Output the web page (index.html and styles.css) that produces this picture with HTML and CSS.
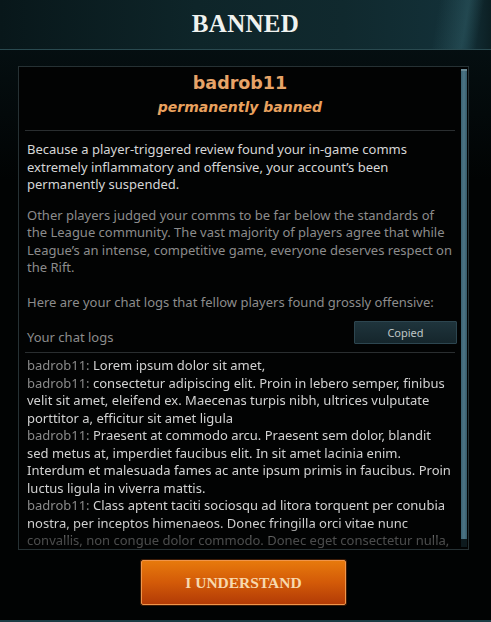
FILE: index.html
```html
<!DOCTYPE html>
<html>
<head>
<meta charset="utf-8">
<link rel="stylesheet" href="styles.css">
</head>
<body>
<div class="window">
  <header class="header"><h1 class="title">BANNED</h1></header>
  <main class="main">
    <section class="panel">
      <div class="content">
        <div class="who">
          <div class="name">badrob11</div>
          <div class="status">permanently banned</div>
        </div>
        <p class="p1">Because a player-triggered review found your in-game comms extremely inflammatory and offensive, your account’s been permanently suspended.</p>
        <p class="p2">Other players judged your comms to be far below the standards of the League community. The vast majority of players agree that while League’s an intense, competitive game, everyone deserves respect on the Rift.</p>
        <p class="p3">Here are your chat logs that fellow players found grossly offensive:</p>
        <div class="logs-head">
          <span class="logs-label">Your chat logs</span>
          <button class="copy">Copied</button>
        </div>
        <div class="logs">
          <div class="line"><span class="who-n">badrob11:</span> Lorem ipsum dolor sit amet,</div>
          <div class="line"><span class="who-n">badrob11:</span> consectetur adipiscing elit. Proin in lebero semper, finibus velit sit amet, eleifend ex. Maecenas turpis nibh, ultrices vulputate porttitor a, efficitur sit amet ligula</div>
          <div class="line"><span class="who-n">badrob11:</span> Praesent at commodo arcu. Praesent sem dolor, blandit sed metus at, imperdiet faucibus elit. In sit amet lacinia enim. Interdum et malesuada fames ac ante ipsum primis in faucibus. Proin luctus ligula in viverra mattis.</div>
          <div class="line"><span class="who-n">badrob11:</span> Class aptent taciti sociosqu ad litora torquent per conubia nostra, per inceptos himenaeos. Donec fringilla orci vitae nunc convallis, non congue dolor commodo. Donec eget consectetur nulla, sit amet tempus lorem.</div>
        </div>
      </div>
      <div class="scroll"><div class="thumb"></div></div>
    </section>
    <div class="actions"><button class="understand">I UNDERSTAND</button></div>
  </main>
</div>
</body>
</html>
```
FILE: styles.css
```css
* { box-sizing: border-box; }
html, body { margin: 0; padding: 0; }
body {
  width: 491px;
  height: 622px;
  overflow: hidden;
  background: #010202;
  font-family: "Noto Sans", "Open Sans", sans-serif;
}
.window {
  width: 491px;
  height: 622px;
  display: flex;
  flex-direction: column;
  background:
    linear-gradient(180deg, rgba(13,38,44,0.95) 0px, rgba(8,24,28,0.6) 40px, rgba(2,6,7,0) 180px),
    #010303;
  border-bottom: 2px solid #1d3d45;
}
.header {
  height: 50px;
  flex: none;
  border-bottom: 1px solid #2a4a50;
  background:
    linear-gradient(100deg, rgba(0,0,0,0) 88%, rgba(80,140,150,0.25) 94%, rgba(0,0,0,0) 97%),
    linear-gradient(90deg, #08171a 0%, #0e2529 40%, #10292e 70%, #133139 95%, #0c1f23 100%);
  display: flex;
  justify-content: center;
  align-items: center;
}
.title {
  margin: 0;
  margin-top: -2px;
  font-family: "Liberation Serif", "Times New Roman", serif;
  font-weight: bold;
  font-size: 25px;
  letter-spacing: 0.3px;
  color: #f0f2ef;
}
.main {
  flex: 1;
  display: flex;
  flex-direction: column;
  padding: 16px 22px 0 18px;
}
.panel {
  height: 484px;
  flex: none;
  display: flex;
  background: #020303;
  border: 1px solid #263134;
}
.content {
  flex: 1;
  min-width: 0;
  padding: 0 6px 0 6px;
  display: flex;
  flex-direction: column;
}
.who {
  text-align: center;
  padding-top: 5px;
  padding-bottom: 10px;
  border-bottom: 1px solid #2a2e30;
}
.name {
  font-family: "DejaVu Sans", sans-serif;
  font-weight: bold;
  font-size: 17.5px;
  line-height: 22px;
  color: #e7a468;
}
.status {
  font-family: "DejaVu Sans", sans-serif;
  font-weight: bold;
  font-style: italic;
  font-size: 14px;
  line-height: 26px;
  color: #e9a15e;
}
p {
  margin: 0;
  padding-left: 2px;
  font-size: 13px;
  line-height: 17.5px;
}
.p1 { margin-top: 10px; color: #d6d6d6; }
.p2 { margin-top: 13px; color: #8c8c8c; }
.p3 { margin-top: 17px; color: #8c8c8c; }
.logs-head {
  margin-top: 10px;
  display: flex;
  justify-content: space-between;
  align-items: flex-end;
  padding-left: 2px;
  padding-bottom: 6px;
  border-bottom: 1px solid #2a2e30;
}
.logs-label {
  font-size: 13px;
  line-height: 17px;
  color: #8c8c8c;
}
.copy {
  width: 103px;
  height: 23px;
  margin-right: -2px;
  margin-bottom: 2px;
  font-family: "Noto Sans", "Open Sans", sans-serif;
  font-size: 11px;
  color: #bfc6c6;
  background: linear-gradient(180deg, #1f343c, #15262c);
  border: 1px solid #2d4650;
  border-radius: 1px;
  padding: 0;
}
.logs {
  flex: 1;
  min-height: 0;
  overflow: hidden;
  padding: 4px 0 0 2px;
  font-size: 13px;
  line-height: 17.5px;
  color: #d2d2d2;
  -webkit-mask-image: linear-gradient(180deg, #000 0, #000 172px, rgba(0,0,0,0.35) 186px);
  mask-image: linear-gradient(180deg, #000 0, #000 172px, rgba(0,0,0,0.35) 186px);
}
.who-n { color: #8a8a8a; }
.scroll {
  width: 6px;
  flex: none;
  margin: 2px 1px 2px 0;
  background: #0d1a1e;
}
.thumb {
  height: 470px;
  background: linear-gradient(90deg, #3b6272, #4c7586 50%, #365a68);
  border-top: 2px solid #6a8a96;
}
.actions {
  display: flex;
  justify-content: center;
  padding-top: 10px;
}
.understand {
  width: 205px;
  height: 45px;
  font-family: "Liberation Serif", "Times New Roman", serif;
  font-weight: bold;
  font-size: 15.5px;
  color: #f7d9ae;
  background: linear-gradient(180deg, #e77a0c 0%, #d35a08 50%, #b23b06 100%);
  border: 1px solid #f0954a;
  border-radius: 2px;
  box-shadow: 0 0 0 1px #3a1a06;
  padding: 0;
}
```
